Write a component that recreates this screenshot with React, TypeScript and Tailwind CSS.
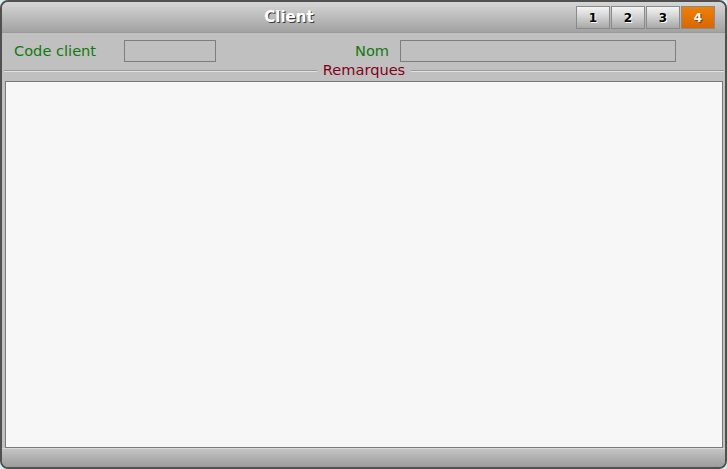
export default function App() {
  const tabs = ["1", "2", "3", "4"]
  const active = "4"

  return (
    <div className="w-[727px] h-[469px] bg-[#d9eeee] font-['DejaVu_Sans',sans-serif]">
      <div className="w-full h-full flex flex-col rounded-[8px] border-2 border-[#505050] overflow-hidden bg-[#c0c0c0]">
        {/* Title bar */}
        <div className="h-[30px] shrink-0 flex items-center bg-gradient-to-b from-[#d6d6d6] to-[#a2a2a2]">
          <div className="flex-1 text-center text-[15px] font-bold text-white [text-shadow:1px_1px_0_#3a3a3a]">
            Client
          </div>
          <div className="flex gap-px mr-[10px] mt-[1px]">
            {tabs.map((t) => (
              <div
                key={t}
                className={
                  t === active
                    ? "w-[34px] h-[23px] flex items-center justify-center border border-[#8a8a8a] bg-gradient-to-b from-[#f08000] to-[#d86800] text-white text-[12px] font-bold [text-shadow:1px_1px_0_#7a3a00]"
                    : "w-[34px] h-[23px] flex items-center justify-center border border-[#8a8a8a] bg-gradient-to-b from-[#f4f4f4] via-[#d0d0d0] to-[#a8a8a8] text-black text-[12px] font-bold [text-shadow:1px_1px_0_#ffffff]"
                }
              >
                {t}
              </div>
            ))}
          </div>
        </div>

        {/* Body */}
        <div className="flex-1 flex flex-col border-t border-[#9a9a9a]">
          <div className="flex items-center h-[22px] mt-[7px]">
            <div className="w-[122px] pl-[12px] text-[14.6px] text-[#0f7a0f]">Code client</div>
            <div className="w-[92px] h-[22px] border border-[#7e7e7e] bg-[#c0c0c0]" />
            <div className="ml-[139px] w-[45px] text-[14.6px] text-[#0f7a0f]">Nom</div>
            <div className="w-[276px] h-[22px] border border-[#7e7e7e] bg-[#c0c0c0]" />
          </div>

          <div className="flex items-center h-[16px] mt-[1px] pl-[2px] pr-[1px]">
            <div className="flex-1 h-[2px] border-t border-[#9a9a9a] border-b border-b-[#e2e2e2]" />
            <div className="px-[6px] -mt-[3px] text-[14.6px] leading-[16px] text-[#800018]">Remarques</div>
            <div className="flex-1 h-[2px] border-t border-[#9a9a9a] border-b border-b-[#e2e2e2]" />
          </div>

          <div className="flex-1 ml-[3px] mr-[2px] mt-[2px] border border-[#7a7a7a] bg-[#f7f7f7]" />
        </div>

        {/* Bottom bar */}
        <div className="h-[19px] shrink-0 border-t border-[#d8d8d8] bg-gradient-to-b from-[#c4c4c4] to-[#9c9c9c]" />
      </div>
    </div>
  )
}
